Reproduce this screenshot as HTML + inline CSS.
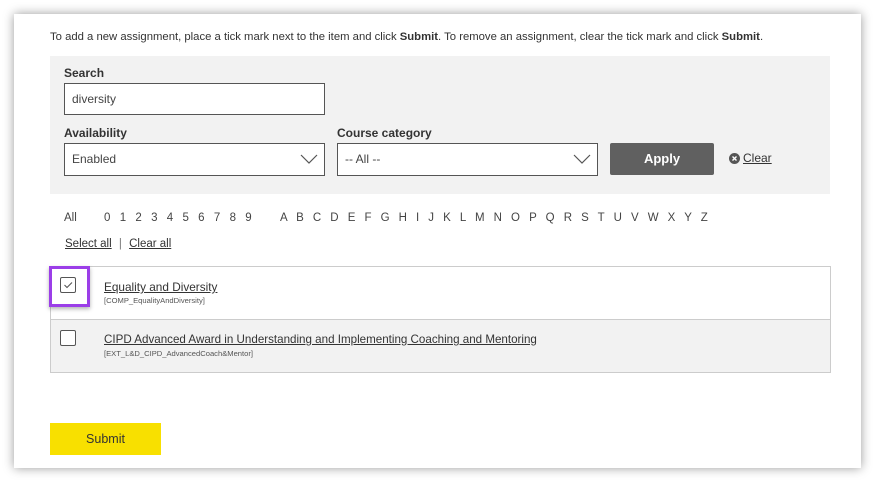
<!DOCTYPE html><html><head><style>
body{margin:0;width:875px;height:483px;background:#fff;font-family:"Liberation Sans",sans-serif;color:#333;position:relative;overflow:hidden}
.card{position:absolute;left:14px;top:14px;width:847px;height:454px;background:#fff;box-shadow:0 0 10px rgba(0,0,0,.4)}
.a{position:absolute;white-space:nowrap}
.inp{position:absolute;background:#fff;border:1px solid #555;box-sizing:border-box;font-size:12px;padding-left:7px;line-height:30px;color:#444}
.chev{position:absolute;right:6px;top:9px}
u{text-decoration:underline}
.cb{position:absolute;width:16px;height:16px;border:1px solid #555;border-radius:2px;background:#fff;box-sizing:border-box}
</style></head><body>
<div class="card"></div>
<div class="a" style="left:50px;top:31px;font-size:11.3px">To add a new assignment, place a tick mark next to the item and click <b>Submit</b>. To remove an assignment, clear the tick mark and click <b>Submit</b>.</div>
<div class="a" style="left:50px;top:56px;width:780px;height:138px;background:#f2f2f2"></div>
<div class="a" style="left:64px;top:66px;font-size:12px;font-weight:bold">Search</div>
<div class="inp" style="left:64px;top:83px;width:261px;height:32px">diversity</div>
<div class="a" style="left:64px;top:126px;font-size:12px;font-weight:bold">Availability</div>
<div class="a" style="left:337px;top:126px;font-size:12px;font-weight:bold">Course category</div>
<div class="inp" style="left:64px;top:143px;width:261px;height:33px">Enabled<svg class="chev" width="18" height="12"><path d="M1 2l8 8 8-8" fill="none" stroke="#555" stroke-width="1.2"/></svg></div>
<div class="inp" style="left:337px;top:143px;width:261px;height:33px">-- All --<svg class="chev" width="18" height="12"><path d="M1 2l8 8 8-8" fill="none" stroke="#555" stroke-width="1.2"/></svg></div>
<div class="a" style="left:610px;top:143px;width:104px;height:32px;background:#606060;border-radius:2px;color:#fff;font-size:13px;font-weight:bold;text-align:center;line-height:32px">Apply</div>
<svg class="a" style="left:729px;top:153px" width="11" height="11"><circle cx="5.5" cy="5.5" r="5.5" fill="#555"/><path d="M3.5 3.5l4 4M7.5 3.5l-4 4" stroke="#fff" stroke-width="1.4"/></svg>
<div class="a" style="left:743px;top:151px;font-size:12px"><u>Clear</u></div>
<div class="a" style="left:64px;top:212px;font-size:11.5px;color:#444">All</div>
<div class="a" style="left:104px;top:212px;font-size:11.5px;color:#444;letter-spacing:9.3px">0123456789</div>
<div class="a" style="left:280px;top:212px;font-size:11.5px;color:#444;word-spacing:5.9px">A B C D E F G H I J K L M N O P Q R S T U V W X Y Z</div>
<div class="a" style="left:65px;top:238px;font-size:11.5px"><u>Select all</u> <span style="color:#777;margin:0 4px">|</span> <u>Clear all</u></div>
<div class="a" style="left:50px;top:266px;width:779px;height:105px;border:1px solid #ccc"></div>
<div class="a" style="left:51px;top:319px;width:779px;height:52px;background:#f2f2f2;border-top:1px solid #ccc"></div>
<div class="a" style="left:49px;top:266px;width:41px;height:41px;border:3px solid #9b3ee8;box-sizing:border-box;box-shadow:0 2px 4px rgba(0,0,0,.3)"></div>
<div class="cb" style="left:60px;top:277px"><svg width="14" height="14" style="position:absolute;left:0;top:0"><path d="M3.5 7l2.5 2.5 5-5" fill="none" stroke="#555" stroke-width="1.1"/></svg></div>
<div class="cb" style="left:60px;top:330px"></div>
<div class="a" style="left:104px;top:280px;font-size:11.8px"><u>Equality and Diversity</u></div>
<div class="a" style="left:104px;top:296px;font-size:7.6px;color:#555">[COMP_EqualityAndDiversity]</div>
<div class="a" style="left:104px;top:333px;font-size:11.6px"><u>CIPD Advanced Award in Understanding and Implementing Coaching and Mentoring</u></div>
<div class="a" style="left:104px;top:349px;font-size:7.6px;color:#555">[EXT_L&amp;D_CIPD_AdvancedCoach&amp;Mentor]</div>
<div class="a" style="left:50px;top:423px;width:111px;height:32px;background:#f8e000;font-size:12.5px;text-align:center;line-height:32px">Submit</div>
</body></html>
